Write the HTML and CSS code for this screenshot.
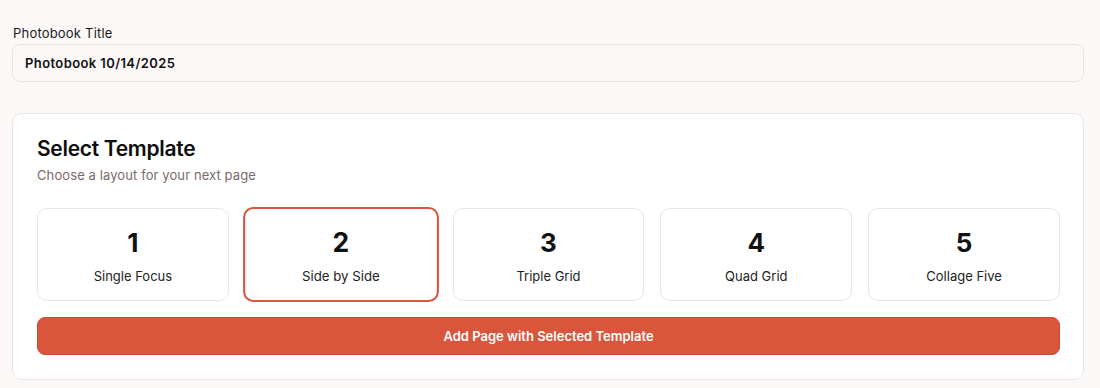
FILE: index.html
```html
<!DOCTYPE html>
<html lang="en">
<head>
  <meta charset="UTF-8">
  <title>Photobook</title>
  <link rel="stylesheet" href="styles.css">
</head>
<body>
  <div class="page">
    <label class="field-label" for="title">Photobook Title</label>
    <input type="text" id="title" class="title-input" value="Photobook 10/14/2025" />

    <div class="card">
      <h2>Select Template</h2>
      <p class="subtitle">Choose a layout for your next page</p>

      <div class="templates">
        <button class="tile"><span class="num">1</span><span class="name">Single Focus</span></button>
        <button class="tile selected"><span class="num">2</span><span class="name">Side by Side</span></button>
        <button class="tile"><span class="num">3</span><span class="name">Triple Grid</span></button>
        <button class="tile"><span class="num">4</span><span class="name">Quad Grid</span></button>
        <button class="tile"><span class="num">5</span><span class="name">Collage Five</span></button>
      </div>

      <button class="btn-add">Add Page with Selected Template</button>
    </div>
  </div>
</body>
</html>
```

FILE: styles.css
```css
body {
  font-family: Inter, 'Noto Sans', sans-serif;
  background: #fcf8f8;
  margin: 0;
  padding: 0;
  color: #111;
}

.page {
  padding: 24px 16px 0 12px;
}

.field-label {
  display: block;
  font-size: 13px;
  line-height: 18px;
  letter-spacing: 0.2px;
  color: #1a1a1a;
  margin-bottom: 2px;
  padding-left: 1px;
}

.title-input {
  display: block;
  box-sizing: border-box;
  width: 100%;
  height: 38px;
  padding: 0 12px;
  font-family: inherit;
  font-size: 13px;
  font-weight: 600;
  letter-spacing: 0.4px;
  color: #111;
  background: #fcf8f8;
  border: 1px solid #ebe3e3;
  border-radius: 8px;
  outline: none;
}

.card {
  margin-top: 31px;
  padding: 21px 23px 24px 24px;
  background: #fff;
  border: 1px solid #ebe4e4;
  border-radius: 10px;
}

h2 {
  margin: 0;
  font-size: 21px;
  line-height: 28px;
  font-weight: 600;
  letter-spacing: -0.3px;
  color: #0d0d0d;
}

.subtitle {
  margin: 2px 0 0;
  font-size: 13px;
  line-height: 20px;
  letter-spacing: 0.1px;
  color: #7a6a6a;
}

.templates {
  display: grid;
  grid-template-columns: repeat(5, 1fr);
  gap: 16px;
  margin-top: 23px;
}

.tile {
  display: flex;
  flex-direction: column;
  align-items: center;
  height: 93px;
  padding: 16px 0 0;
  background: #fff;
  border: 1px solid #ebe4e4;
  border-radius: 10px;
  font-family: inherit;
  color: #111;
  cursor: pointer;
}

.tile.selected {
  border: 2px solid #d9553b;
  padding-top: 15px;
  transform: scale(1.02);
}

.num {
  font-size: 26px;
  line-height: 36px;
  font-weight: 700;
}

.name {
  margin-top: 5px;
  font-size: 13px;
  line-height: 20px;
  color: #222;
}

.tile.selected .name {
  margin-top: 4px;
}

.btn-add {
  display: block;
  width: 100%;
  height: 38px;
  margin-top: 16px;
  background: #d9553b;
  border: 1px solid #d44a2c;
  border-radius: 8px;
  color: #fff;
  font-family: inherit;
  font-size: 13px;
  font-weight: 600;
  cursor: pointer;
}
```
